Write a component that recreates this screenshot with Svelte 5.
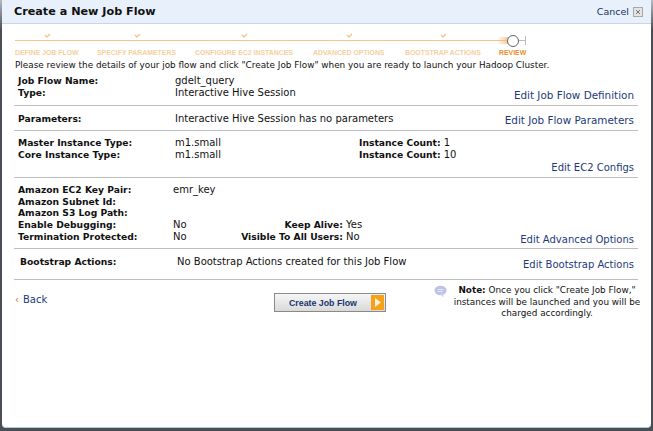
<script>
  const steps = [
    { label: "DEFINE JOB FLOW", width: 82 },
    { label: "SPECIFY PARAMETERS", width: 98 },
    { label: "CONFIGURE EC2 INSTANCES", width: 118 },
    { label: "ADVANCED OPTIONS", width: 92 },
    { label: "BOOTSTRAP ACTIONS", width: 94 },
  ];
</script>

<div class="frame">
  <div class="dialog">
    <header>
      <h1>Create a New Job Flow</h1>
      <div class="cancel">
        Cancel
        <svg width="10" height="10" viewBox="0 0 10 10">
          <rect x="0.5" y="0.5" width="9" height="9" fill="#e4e4e4" stroke="#a8a8a8" />
          <path d="M3 3l4 4M7 3l-4 4" stroke="#777" stroke-width="1" />
        </svg>
      </div>
    </header>

    <div class="wizard">
      <div class="track">
        <div class="line"></div>
        <div class="glow"></div>
        <div class="circle"></div>
        <div class="end"></div>
      </div>
      <div class="steps">
        {#each steps as step}
          <span class="step" style="width: {step.width}px">
            <span class="label">
              <svg class="tick" width="7" height="5" viewBox="0 0 7 5">
                <path d="M1 2l2 2 3-3" fill="none" stroke="#f2c58c" stroke-width="1.4" />
              </svg>
              {step.label}
            </span>
          </span>
        {/each}
        <span class="step current">REVIEW</span>
      </div>
    </div>

    <p class="intro">
      Please review the details of your job flow and click "Create Job Flow" when you are ready to launch your Hadoop Cluster.
    </p>

    <section class="sec-def">
      <div class="row"><b>Job Flow Name:</b><span>gdelt_query</span></div>
      <div class="row"><b>Type:</b><span>Interactive Hive Session</span></div>
      <a href="#def">Edit Job Flow Definition</a>
    </section>

    <section class="sec-params">
      <div class="row"><b>Parameters:</b><span>Interactive Hive Session has no parameters</span></div>
      <a href="#par">Edit Job Flow Parameters</a>
    </section>

    <section class="sec-ec2">
      <div class="row">
        <b>Master Instance Type:</b><span class="type">m1.small</span>
        <b class="count">Instance Count:</b><span>1</span>
      </div>
      <div class="row">
        <b>Core Instance Type:</b><span class="type">m1.small</span>
        <b class="count">Instance Count:</b><span>10</span>
      </div>
      <a href="#ec2">Edit EC2 Configs</a>
    </section>

    <section class="sec-adv">
      <div class="row"><b>Amazon EC2 Key Pair:</b><span>emr_key</span></div>
      <div class="row"><b>Amazon Subnet Id:</b></div>
      <div class="row"><b>Amazon S3 Log Path:</b></div>
      <div class="row">
        <b>Enable Debugging:</b><span class="flag">No</span>
        <b class="right">Keep Alive:</b><span>Yes</span>
      </div>
      <div class="row">
        <b>Termination Protected:</b><span class="flag">No</span>
        <b class="right">Visible To All Users:</b><span>No</span>
      </div>
      <a href="#adv">Edit Advanced Options</a>
    </section>

    <section class="sec-boot">
      <div class="row"><b>Bootstrap Actions:</b><span>No Bootstrap Actions created for this Job Flow</span></div>
      <a href="#boot">Edit Bootstrap Actions</a>
    </section>

    <footer>
      <a class="back" href="#back"><i>‹</i>Back</a>
      <button type="button">
        <span>Create Job Flow</span>
        <span class="go">
          <svg width="13" height="15" viewBox="0 0 13 15">
            <rect width="13" height="15" fill="#f7a11a" />
            <path d="M4 3l6 4.5-6 4.5z" fill="#fff3d8" />
          </svg>
        </span>
      </button>
      <svg class="bubble" width="13" height="13" viewBox="0 0 13 13">
        <ellipse cx="6.5" cy="5.5" rx="6" ry="4.8" fill="#bcc3e6" />
        <path d="M6 9l3.5 3.5V8z" fill="#cdd2ec" />
        <path d="M3.5 4.5h6M3.5 6.5h5" stroke="#e4e7f6" stroke-width="1" />
      </svg>
      <p class="note">
        <b>Note:</b> Once you click "Create Job Flow,"<br />
        instances will be launched and you will be<br />
        charged accordingly.
      </p>
    </footer>
  </div>
</div>

<style>
  :global(body) {
    margin: 0;
    background: #fff;
  }
  .frame {
    width: 653px;
    height: 431px;
    box-sizing: border-box;
    background: linear-gradient(#b5bac0, #4a4f55 30px);
    padding: 0 2px 3px 2px;
    overflow: hidden;
  }
  .dialog {
    height: 428px;
    box-sizing: border-box;
    background: #fff;
    border-bottom: 1px solid #a9cbe4;
    border-radius: 0 0 4px 4px;
    font-family: "DejaVu Sans", Verdana, sans-serif;
    font-size: 10px;
    line-height: 11px;
    color: #111;
  }
  header {
    height: 23px;
    display: flex;
    align-items: center;
    justify-content: space-between;
    padding: 0 8px 0 12px;
    background: #e8f0fb;
    border-bottom: 1px solid #c6d6e6;
  }
  h1 {
    margin: 0;
    font-size: 11.2px;
    font-weight: bold;
    color: #111;
  }
  .cancel {
    display: flex;
    align-items: center;
    gap: 4px;
    font-size: 9.5px;
    color: #17305e;
  }
  .wizard {
    padding: 16px 0 0 13px;
  }
  .track {
    position: relative;
    width: 511px;
    height: 8px;
  }
  .line {
    position: absolute;
    left: 0;
    right: 14px;
    top: 0;
    height: 1px;
    background: #f2c58c;
  }
  .glow {
    position: absolute;
    left: 482px;
    width: 14px;
    top: -3px;
    height: 7px;
    background: linear-gradient(to right, transparent, #f5b878);
  }
  .circle {
    position: absolute;
    left: 492px;
    top: -5px;
    width: 10px;
    height: 10px;
    border: 1px solid #666;
    border-radius: 50%;
    background: #fff;
  }
  .end {
    position: absolute;
    left: 504px;
    right: 0;
    top: 0;
    height: 1px;
    background: #bbb;
  }
  .end::after {
    content: "";
    position: absolute;
    right: 0;
    top: -4px;
    width: 1px;
    height: 9px;
    background: #bbb;
  }
  .steps {
    display: flex;
    font-family: "Liberation Sans", Arial, sans-serif;
    font-size: 6.9px;
    font-weight: bold;
    line-height: 9px;
    color: #f5cfa0;
    white-space: nowrap;
  }
  .step {
    display: block;
  }
  .label {
    position: relative;
    display: inline-block;
  }
  .tick {
    position: absolute;
    left: 50%;
    top: -15px;
    margin-left: -3px;
  }
  .current {
    color: #e98f2e;
  }
  .intro {
    margin: 2px 0 0 13px;
    white-space: nowrap;
    line-height: 12px;
    font-size: 8.85px;
  }
  section {
    position: relative;
    margin: 0 13px 0 12px;
    border-bottom: 1px solid #bdbdbd;
    box-sizing: border-box;
  }
  section a {
    position: absolute;
    right: 4px;
    bottom: 3px;
  }
  a {
    color: #1d3a78;
    text-decoration: none;
  }
  .row {
    display: flex;
    height: 12px;
    line-height: 12px;
    white-space: nowrap;
  }
  b {
    font-size: 9.2px;
    color: #111;
  }
  .row > b:first-child {
    width: 161px;
    flex: none;
    padding-left: 4px;
    box-sizing: border-box;
  }
  .sec-def {
    height: 35px;
    padding-top: 4px;
  }
  .sec-def a,
  .sec-params a {
    font-size: 10.4px;
    bottom: 4px;
  }
  .sec-params {
    height: 25px;
    padding-top: 7px;
  }
  .sec-ec2 {
    height: 47px;
    padding-top: 6px;
  }
  .sec-ec2 a {
    bottom: 4px;
  }
  .type {
    width: 184px;
    flex: none;
  }
  .count {
    margin-right: 3px;
  }
  .sec-adv {
    height: 71px;
    padding-top: 6px;
  }
  .sec-adv .row {
    height: 11.7px;
  }
  .sec-adv .row > b:first-child {
    width: 159px;
  }
  .flag {
    width: 41px;
    flex: none;
  }
  .sec-adv .row > b.right {
    width: 129px;
    margin-right: 3px;
    text-align: right;
    flex: none;
  }
  .sec-boot {
    height: 31px;
    padding-top: 7px;
  }
  .sec-boot .row > b:first-child {
    width: 163px;
    padding-left: 6px;
  }
  .sec-boot a {
    bottom: 9px;
  }
  footer {
    position: relative;
    height: 60px;
  }
  .back {
    position: absolute;
    left: 13px;
    top: 14px;
  }
  .back i {
    color: #e06a1b;
    font-style: normal;
    margin-right: 4px;
  }
  button {
    position: absolute;
    left: 272px;
    top: 13px;
    width: 112px;
    height: 19px;
    display: flex;
    align-items: center;
    justify-content: space-between;
    padding: 0 1px 0 14px;
    border: 1px solid #8a8a8a;
    background: linear-gradient(#f6f6f6, #d9d9d9);
    font-family: "Liberation Sans", Arial, sans-serif;
    font-size: 8.8px;
    font-weight: bold;
    color: #17356f;
    box-sizing: border-box;
  }
  .go {
    display: flex;
    height: 15px;
  }
  .bubble {
    position: absolute;
    left: 432px;
    top: 5px;
  }
  .note {
    position: absolute;
    left: 445px;
    top: 5px;
    width: 200px;
    margin: 0;
    text-align: center;
    line-height: 11.5px;
    font-size: 8.85px;
    white-space: nowrap;
  }
  .note b {
    font-size: 8.85px;
  }
</style>
